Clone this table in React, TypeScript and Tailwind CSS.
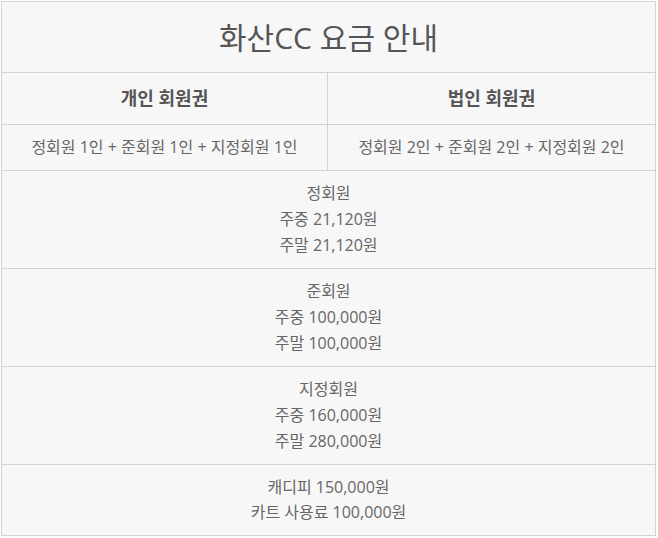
export default function App() {
  const font = { fontFamily: '"Open Sans", "Noto Sans CJK KR", sans-serif' };
  return (
    <div className="bg-white w-[658px] h-[538px] pt-[1px] pl-[1px]" style={font}>
      <div className="w-[655px] border border-[#d4d4d4] bg-[#f7f7f7] text-[#666]">
        <div className="h-[71px] flex items-center justify-center text-[30px] text-[#555] border-b border-[#d4d4d4]">
          화산CC 요금 안내
        </div>
        <div className="grid grid-cols-[326px_1fr] border-b border-[#d4d4d4]">
          <div className="h-[51px] flex items-center justify-center text-[18px] font-semibold text-[#555] border-r border-[#d4d4d4]">
            개인 회원권
          </div>
          <div className="h-[51px] flex items-center justify-center text-[18px] font-semibold text-[#555]">
            법인 회원권
          </div>
        </div>
        <div className="grid grid-cols-[326px_1fr] border-b border-[#d4d4d4]">
          <div className="h-[45px] pb-[2px] flex items-center justify-center text-[16px] border-r border-[#d4d4d4]">
            정회원 1인 + 준회원 1인 + 지정회원 1인
          </div>
          <div className="h-[45px] pb-[2px] flex items-center justify-center text-[16px]">
            정회원 2인 + 준회원 2인 + 지정회원 2인
          </div>
        </div>
        {[
          ["정회원", "주중 21,120원", "주말 21,120원"],
          ["준회원", "주중 100,000원", "주말 100,000원"],
          ["지정회원", "주중 160,000원", "주말 280,000원"],
        ].map((lines) => (
          <div
            key={lines[0]}
            className="h-[98px] pb-[2px] flex flex-col items-center justify-center text-[16px] leading-[26px] border-b border-[#d4d4d4]"
          >
            {lines.map((l) => (
              <div key={l}>{l}</div>
            ))}
          </div>
        ))}
        <div className="h-[70px] flex flex-col items-center justify-center text-[16px] leading-[25px]">
          <div>캐디피 150,000원</div>
          <div>카트 사용료 100,000원</div>
        </div>
      </div>
    </div>
  );
}
